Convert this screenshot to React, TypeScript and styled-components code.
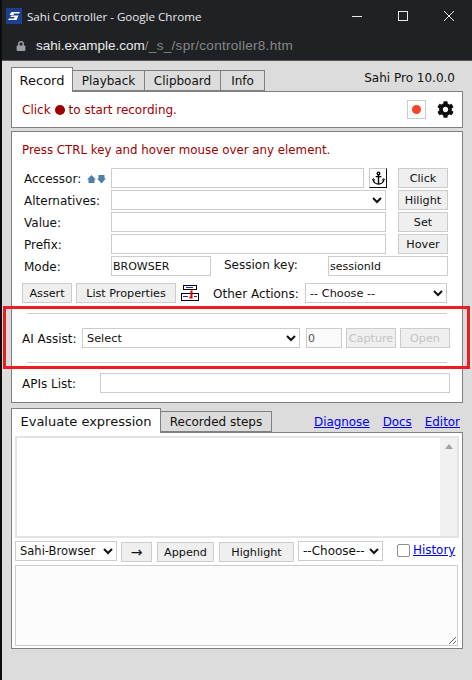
import React from 'react';
import styled, { createGlobalStyle } from 'styled-components';
import { FaCog, FaLock } from 'react-icons/fa';

const GlobalStyle = createGlobalStyle`
  html, body {
    margin: 0;
    padding: 0;
    height: 680px;
    overflow: hidden;
    background: #dcdcdc;
  }
  * {
    box-sizing: border-box;
  }
`;

const Page = styled.div`
  position: relative;
  width: 472px;
  height: 680px;
  display: flex;
  flex-direction: column;
  font-family: "DejaVu Sans", Verdana, sans-serif;
  font-size: 12px;
  color: #111;
  border-left: 2px solid #0c0c0c;
`;

const TitleBar = styled.div`
  height: 32px;
  flex: none;
  background: #202124;
  display: flex;
  align-items: center;
  padding-left: 4px;
  color: #e8eaed;
  font-family: "Open Sans", "Liberation Sans", Arial, sans-serif;
  font-size: 11.6px;
`;

const TitleText = styled.span`
  margin-left: 5px;
  flex: 1;
`;

const WindowButton = styled.span`
  width: 46px;
  height: 32px;
  display: flex;
  align-items: center;
  justify-content: center;
`;

const AddressBar = styled.div`
  height: 29px;
  flex: none;
  background: #202124;
  border-bottom: 1px solid #55575a;
  display: flex;
  align-items: center;
  padding: 0 0 1px 14px;
  font-family: "Liberation Sans", Arial, sans-serif;
  font-size: 13.5px;
  color: #85888c;
`;

const Host = styled.span`
  margin-left: 10px;
  color: #e8eaed;
`;

const UrlPath = styled.span`
  letter-spacing: 0.3px;
`;

const Content = styled.div`
  flex: 1;
  display: flex;
  flex-direction: column;
  padding: 6px 0 0 9px;
  width: 461px;
`;

const TabRow = styled.div<{ $top?: number }>`
  height: 24px;
  margin-top: ${({ $top }) => $top ?? 0}px;
  display: flex;
  align-items: flex-end;
  flex: none;
`;

const Tab = styled.div<{ $active?: boolean; $w: number }>`
  width: ${({ $w }) => $w}px;
  height: ${({ $active }) => ($active ? '25px' : '21px')};
  margin-bottom: ${({ $active }) => ($active ? '-1px' : '0')};
  background: ${({ $active }) => ($active ? '#fff' : '#dcdcdc')};
  border: 1px solid #808080;
  border-bottom: ${({ $active }) => ($active ? 'none' : '1px solid #808080')};
  border-left-width: ${({ $active }) => ($active ? '1px' : '0')};
  display: flex;
  align-items: center;
  justify-content: center;
  font-size: ${({ $active }) => ($active ? '13px' : '12px')};
  position: relative;
  z-index: ${({ $active }) => ($active ? 1 : 0)};
`;

const Version = styled.div`
  margin-left: auto;
  padding: 0 8px 2px 0;
  align-self: center;
`;

const Panel = styled.div`
  background: #fff;
  border: 1px solid #808080;
  flex: none;
`;

const StatusPanel = styled(Panel)`
  height: 37px;
  display: flex;
  align-items: center;
  padding: 0 8px 0 10px;
  color: #a00000;
  font-size: 12px;
`;

const RecDot = styled.span`
  display: inline-block;
  width: 10px;
  height: 10px;
  border-radius: 50%;
  background: #a00000;
  margin: 0 4px 0 4px;
`;

const RecButton = styled.span`
  margin-left: auto;
  width: 19px;
  height: 19px;
  border: 1px solid #ccc;
  display: flex;
  align-items: center;
  justify-content: center;
  &::after {
    content: '';
    width: 9px;
    height: 9px;
    border-radius: 50%;
    background: #f44527;
  }
`;

const GearWrap = styled.span`
  display: flex;
  margin-left: 11px;
  color: #0c0c0c;
  font-size: 17px;
`;

const FormPanel = styled(Panel)`
  margin-top: 3px;
  height: 272px;
  padding: 10px 0 0 10px;
`;

const Hint = styled.div`
  color: #a00000;
  height: 16px;
  line-height: 17px;
  font-size: 11.82px;
  margin-bottom: 10px;
`;

const FormGrid = styled.div`
  display: grid;
  grid-template-columns: 87px 275px 12px 50px;
  grid-auto-rows: 20px;
  row-gap: 2px;
  margin-left: 2px;
  align-items: center;
`;

const Label = styled.label<{ $w?: number }>`
  font-size: 12px;
  display: flex;
  align-items: center;
  white-space: nowrap;
  padding-top: 2px;
  width: ${({ $w }) => ($w ? `${$w}px` : 'auto')};
  flex: none;
`;

const Field = styled.input<{ $w?: number; $ml?: number; $muted?: boolean }>`
  height: 20px;
  width: ${({ $w }) => ($w ? `${$w}px` : '100%')};
  margin-left: ${({ $ml }) => $ml ?? 0}px;
  flex: none;
  border: 1px solid #ccc;
  background: ${({ $muted }) => ($muted ? '#fafafa' : '#fff')};
  padding: 0 1px;
  font-family: "DejaVu Sans", Verdana, sans-serif;
  font-size: 11px;
  color: ${({ $muted }) => ($muted ? '#555' : '#111')};
  outline: none;
  border-radius: 0;
`;

const Choice = styled.select<{ $w?: number; $ml?: number; $size?: number }>`
  height: 20px;
  width: ${({ $w }) => ($w ? `${$w}px` : '100%')};
  margin-left: ${({ $ml }) => $ml ?? 0}px;
  flex: none;
  border: 1px solid #ccc;
  background-color: #fff;
  padding: 0;
  font-family: "DejaVu Sans", Verdana, sans-serif;
  font-size: ${({ $size }) => $size ?? 11.3}px;
  color: #111;
  border-radius: 0;
  outline: none;
`;

const Btn = styled.button<{ $w?: number; $ml?: number; $drop?: boolean }>`
  height: 20px;
  width: ${({ $w }) => ($w ? `${$w}px` : '100%')};
  margin-left: ${({ $ml }) => $ml ?? 0}px;
  margin-top: ${({ $drop }) => ($drop ? '1px' : '0')};
  flex: none;
  border: 1px solid #ccc;
  background: #efefef;
  padding: 0;
  font-family: "DejaVu Sans", Verdana, sans-serif;
  font-size: 11.2px;
  color: #111;
  border-radius: 0;
  &:disabled {
    color: #c4c4c4;
  }
`;

const ArrowBtn = styled(Btn)`
  font-size: 14px;
  line-height: 16px;
`;

const AccessorCell = styled.div`
  display: flex;
  align-items: center;
  gap: 5px;
`;

const AnchorBox = styled.span`
  width: 18px;
  height: 20px;
  flex: none;
  display: flex;
  align-items: center;
  justify-content: center;
  background: #fff;
  border: 1px solid #ccc;
  border-right-color: #111;
  border-bottom-color: #111;
`;

const MoveIcon = styled.svg`
  margin-left: 6px;
  flex: none;
`;

const ModeCell = styled.div`
  grid-column: 2 / span 3;
  display: flex;
  align-items: center;
`;

const SessionLabel = styled(Label)`
  margin: 0 0 4px 13px;
  width: 104px;
`;

const ActionsRow = styled.div`
  display: flex;
  align-items: center;
  height: 20px;
  margin-top: 7px;
`;

const PropsIcon = styled.span`
  display: flex;
  margin: 0 14px 0 5px;
`;

const Rule = styled.div<{ $top?: number }>`
  height: 1px;
  width: 420px;
  margin: ${({ $top }) => $top ?? 0}px 0 0 5px;
  background: #ccc;
`;

const AiRow = styled.div`
  display: flex;
  align-items: center;
  height: 20px;
  margin: 14px 0;
`;

const ApisRow = styled.div`
  display: flex;
  align-items: center;
  height: 20px;
  margin-top: 10px;
`;

const LinkBar = styled.div`
  margin-left: auto;
  display: flex;
  gap: 13px;
  padding: 0 3px 3px 0;
  align-self: flex-end;
`;

const Anchor = styled.a`
  color: #0000ee;
  text-decoration: underline;
  font-size: 11.9px;
`;

const EvalPanel = styled(Panel)`
  height: 217px;
  padding: 3px 3px 0 3px;
`;

const Expression = styled.div`
  position: relative;
  height: 102px;
  width: 444px;
  border: 2px solid #e4e4e4;
  background: #fff;
`;

const ScrollTrack = styled.div`
  position: absolute;
  top: 0;
  right: 0;
  bottom: 0;
  width: 17px;
  background: #f1f1f1;
  &::before {
    content: '';
    position: absolute;
    top: 6px;
    left: 5px;
    border-left: 4px solid transparent;
    border-right: 4px solid transparent;
    border-bottom: 5px solid #a3a3a3;
  }
`;

const ToolRow = styled.div`
  display: flex;
  align-items: flex-start;
  height: 20px;
  margin-top: 3px;
`;

const Check = styled.span`
  width: 13px;
  height: 13px;
  flex: none;
  margin: 3px 3px 0 14px;
  background: #fff;
  border: 1px solid #8f8f8f;
  border-radius: 2px;
`;

const HistoryLink = styled(Anchor)`
  margin-top: 2px;
`;

const Output = styled.div`
  position: relative;
  margin-top: 4px;
  height: 81px;
  width: 443px;
  background: #fcfcfc;
  border: 1px solid #ccc;
`;

const Grip = styled.svg`
  position: absolute;
  right: 0;
  bottom: 0;
`;

const Callout = styled.div`
  position: absolute;
  left: 1px;
  top: 306px;
  width: 467px;
  height: 63px;
  border: 3px solid #ed1c24;
  pointer-events: none;
`;

const SahiLogo = () => (
  <svg width="16" height="16" viewBox="0 0 16 16">
    <rect width="16" height="16" fill="#1c3f8f" />
    <path d="M3.5 7 L5.5 4 H14 L13 5.5 H8 L7.5 7 Z M2 12 L3 10.5 H8 L8.5 9 H4.5 L5 7.6 H12.5 L10.5 12 Z" fill="#fff" />
  </svg>
);

const MoveArrows = () => (
  <MoveIcon width="19" height="10" viewBox="0 0 19 10">
    <path d="M4.5 1 L9 5.5 H7.5 V9 H1.5 V5.5 H0 Z" fill="#4f81a8" />
    <path d="M11.5 1 H17.5 V4.5 H19 L14.5 9.5 L10 4.5 H11.5 Z" fill="#4f81a8" />
  </MoveIcon>
);

const AnchorIcon = () => (
  <svg width="13" height="15" viewBox="0 0 14 16" fill="none" stroke="#000" strokeWidth="1.5">
    <circle cx="7" cy="2.5" r="1.4" />
    <path d="M7 4 V14 M4 6 H10 M1.5 9 C1.5 12 4 14 7 14 C10 14 12.5 12 12.5 9" />
    <path d="M0 10 L1.5 8 L3 10 M11 10 L12.5 8 L14 10" strokeWidth="1" />
  </svg>
);

const PropertiesIcon = () => (
  <svg width="18" height="16" viewBox="0 0 18 16" fill="none">
    <rect x="2.5" y="0.5" width="13" height="4" fill="#fff" stroke="#000" />
    <rect x="0.5" y="8.5" width="17" height="7" fill="#fff" stroke="#000" />
    <path d="M5 2.5 H12 M2 11.5 H7 M13 11.5 H16" stroke="#1030c0" />
    <path d="M10.5 5.5 V12.5 H8.5" stroke="#e00000" strokeWidth="2" />
  </svg>
);

export default function App() {
  return (
    <Page>
      <GlobalStyle />
      <TitleBar>
        <SahiLogo />
        <TitleText>Sahi Controller - Google Chrome</TitleText>
        <WindowButton>
          <svg width="10" height="10"><path d="M0 5.5 H10" stroke="#e8eaed" /></svg>
        </WindowButton>
        <WindowButton>
          <svg width="10" height="10"><rect x="0.5" y="0.5" width="9" height="9" fill="none" stroke="#e8eaed" /></svg>
        </WindowButton>
        <WindowButton>
          <svg width="10" height="10"><path d="M0 0 L10 10 M10 0 L0 10" stroke="#e8eaed" /></svg>
        </WindowButton>
      </TitleBar>
      <AddressBar>
        <FaLock size={10} color="#9aa0a6" />
        <Host>sahi.example.com</Host>
        <UrlPath>/_s_/spr/controller8.htm</UrlPath>
      </AddressBar>
      <Content>
        <TabRow>
          <Tab $active $w={62}>Record</Tab>
          <Tab $w={72}>Playback</Tab>
          <Tab $w={76}>Clipboard</Tab>
          <Tab $w={44}>Info</Tab>
          <Version>Sahi Pro 10.0.0</Version>
        </TabRow>
        <StatusPanel>
          Click <RecDot /> to start recording.
          <RecButton />
          <GearWrap><FaCog /></GearWrap>
        </StatusPanel>
        <FormPanel>
          <Hint>Press CTRL key and hover mouse over any element.</Hint>
          <FormGrid>
            <Label>Accessor:<MoveArrows /></Label>
            <AccessorCell>
              <Field $w={253} />
              <AnchorBox><AnchorIcon /></AnchorBox>
            </AccessorCell>
            <span />
            <Btn>Click</Btn>
            <Label>Alternatives:</Label>
            <Choice />
            <span />
            <Btn>Hilight</Btn>
            <Label>Value:</Label>
            <Field />
            <span />
            <Btn>Set</Btn>
            <Label>Prefix:</Label>
            <Field />
            <span />
            <Btn>Hover</Btn>
            <Label>Mode:</Label>
            <ModeCell>
              <Field $w={100} defaultValue="BROWSER" />
              <SessionLabel>Session key:</SessionLabel>
              <Field $w={120} defaultValue="sessionId" />
            </ModeCell>
          </FormGrid>
          <ActionsRow>
            <Btn $w={50}>Assert</Btn>
            <Btn $w={100} $ml={4}>List Properties</Btn>
            <PropsIcon><PropertiesIcon /></PropsIcon>
            <Label $w={92}>Other Actions:</Label>
            <Choice $w={142}><option>-- Choose --</option></Choice>
          </ActionsRow>
          <Rule $top={10} />
          <AiRow>
            <Label $w={60}>AI Assist:</Label>
            <Choice $w={218}><option>Select</option></Choice>
            <Field $w={36} $ml={6} $muted disabled defaultValue="0" />
            <Btn $w={50} $ml={4} disabled>Capture</Btn>
            <Btn $w={50} $ml={4} disabled>Open</Btn>
          </AiRow>
          <Rule />
          <ApisRow>
            <Label $w={78}>APIs List:</Label>
            <Field $w={350} />
          </ApisRow>
        </FormPanel>
        <TabRow $top={5}>
          <Tab $active $w={150}>Evaluate expression</Tab>
          <Tab $w={111}>Recorded steps</Tab>
          <LinkBar>
            <Anchor href="#">Diagnose</Anchor>
            <Anchor href="#">Docs</Anchor>
            <Anchor href="#">Editor</Anchor>
          </LinkBar>
        </TabRow>
        <EvalPanel>
          <Expression><ScrollTrack /></Expression>
          <ToolRow>
            <Choice $w={102} $size={11.5}><option>Sahi-Browser</option></Choice>
            <ArrowBtn $w={31} $ml={4} $drop>&#8594;</ArrowBtn>
            <Btn $w={57} $ml={5} $drop>Append</Btn>
            <Btn $w={75} $ml={5} $drop>Highlight</Btn>
            <Choice $w={85} $ml={4} $size={12}><option>--Choose--</option></Choice>
            <Check />
            <HistoryLink href="#">History</HistoryLink>
          </ToolRow>
          <Output>
            <Grip width="10" height="10">
              <path d="M2 9 L9 2 M6 9 L9 6" stroke="#666" />
            </Grip>
          </Output>
        </EvalPanel>
      </Content>
      <Callout />
    </Page>
  );
}
